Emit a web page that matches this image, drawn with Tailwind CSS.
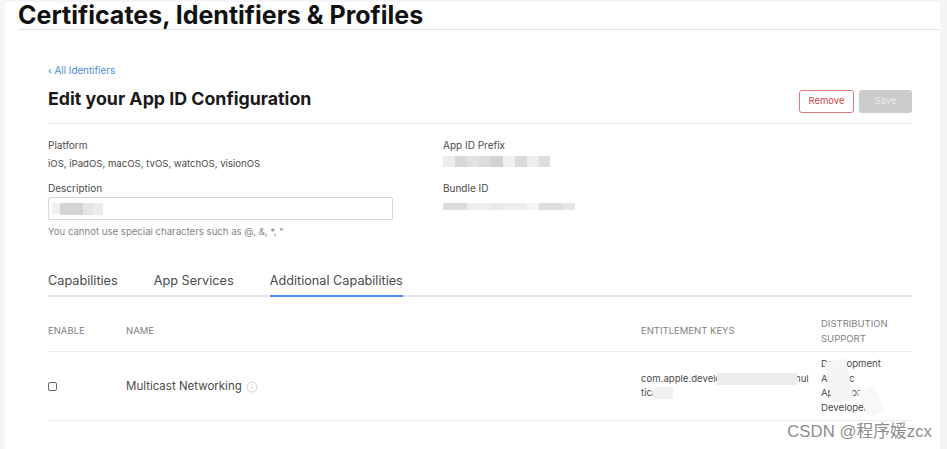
<!DOCTYPE html>
<html lang="en">
<head>
  <meta charset="UTF-8">
  <title>Edit your App ID Configuration</title>
  <script src="https://cdn.jsdelivr.net/npm/@tailwindcss/browser@4"></script>
</head>
<body class="bg-[#f5f5f7] font-['Inter','Liberation_Sans',sans-serif] text-[#333] overflow-hidden">
  <div class="relative w-[947px] h-[449px] pt-[2px] pl-[5px] pr-[7px] overflow-hidden">
    <main class="bg-white h-[447px] pl-[13px] pr-[28px]">
      <!-- Page title -->
      <h1 class="h-[28px] border-b border-[#e3e3e6] text-[25px] leading-[27px] font-bold text-[#111] whitespace-nowrap -mr-[28px]">Certificates, Identifiers &amp; Profiles</h1>

      <section class="pl-[30px]">
        <a href="#" class="block mt-[34px] text-[9.8px] leading-[13px] text-[#4a8ad8]">‹ All Identifiers</a>

        <!-- Heading row -->
        <div class="flex justify-between items-end h-[47px] border-b border-[#e2e2e4] pb-[10px]">
          <h2 class="text-[17.8px] leading-[22px] font-bold text-[#1a1a1a] mb-[3px]">Edit your App ID Configuration</h2>
          <div class="flex gap-[5px]">
            <button class="w-[55px] h-[23px] rounded-[3px] border border-[#e0787a] text-[9.5px] text-[#d0484a] bg-white">Remove</button>
            <button class="w-[53px] h-[23px] rounded-[3px] bg-[#cbcbcb] text-[9.5px] text-[#ececec]">Save</button>
          </div>
        </div>

        <!-- Details -->
        <div class="flex mt-[15px] h-[100px] text-[10px] leading-[13px] text-[#4a4a4a]">
          <div class="w-[395px]">
            <div>Platform</div>
            <div class="mt-[5px] text-[9.6px]">iOS, iPadOS, macOS, tvOS, watchOS, visionOS</div>
            <div class="mt-[12px]">Description</div>
            <div class="mt-[2px] w-[345px] h-[23px] rounded-[2px] border border-[#d6d6d6] flex items-center pl-[3px]">
              <span class="w-[8px] h-[11px] bg-[#f0f0f0]"></span><span class="w-[23px] h-[12px] bg-[#d4d4d4]"></span><span class="w-[10px] h-[12px] bg-[#e4e4e4]"></span><span class="w-[10px] h-[12px] bg-[#ececec]"></span>
            </div>
            <div class="mt-[5px] text-[9.6px] text-[#858585]">You cannot use special characters such as @, &amp;, *, "</div>
          </div>
          <div>
            <div>App ID Prefix</div>
            <div class="mt-[4px] flex h-[11px]">
              <span class="w-[12px] bg-[#ececec]"></span><span class="w-[12px] bg-[#d8d8d8]"></span><span class="w-[12px] bg-[#e2e2e2]"></span><span class="w-[12px] bg-[#dcdcdc]"></span><span class="w-[12px] bg-[#d2d2d2]"></span><span class="w-[12px] bg-[#f0f0f0]"></span><span class="w-[12px] bg-[#dadada]"></span><span class="w-[12px] bg-[#ececec]"></span><span class="w-[11px] bg-[#dedede]"></span>
            </div>
            <div class="mt-[15px]">Bundle ID</div>
            <div class="mt-[8px] flex h-[7px]">
              <span class="w-[24px] bg-[#dcdcdc]"></span><span class="w-[24px] bg-[#eeeeee]"></span><span class="w-[12px] bg-[#e8e8e8]"></span><span class="w-[24px] bg-[#ececec]"></span><span class="w-[12px] bg-[#f4f4f4]"></span><span class="w-[24px] bg-[#dedede]"></span><span class="w-[12px] bg-[#e6e6e6]"></span>
            </div>
          </div>
        </div>

        <!-- Tabs -->
        <div class="flex gap-[36px] mt-[29px] h-[29px] border-b-2 border-[#e4e4e6] text-[12.7px] leading-[20px] text-[#4a4a4a]">
          <a href="#" class="h-[29px] pt-[3px]">Capabilities</a>
          <a href="#" class="h-[29px] pt-[3px]">App Services</a>
          <a href="#" class="h-[29px] pt-[3px] border-b-2 border-[#4a8cf0]">Additional Capabilities</a>
        </div>

        <!-- Capabilities table -->
        <div class="grid grid-cols-[78px_515px_180px_1fr] items-center h-[55px] pt-[15px] border-b border-[#ececec] text-[9.5px] leading-[14.5px] text-[#808080]">
          <div>ENABLE</div>
          <div>NAME</div>
          <div>ENTITLEMENT KEYS</div>
          <div>DISTRIBUTION<br>SUPPORT</div>
        </div>
        <div class="grid grid-cols-[78px_515px_180px_1fr] items-center h-[69px] border-b border-[#ececec] text-[#4a4a4a]">
          <div><input type="checkbox" class="block appearance-none w-[9px] h-[9px] rounded-[2px] border border-[#666] bg-white"></div>
          <div class="flex items-center gap-[4px] pt-[2px] text-[11.5px]">
            Multicast Networking
            <svg width="12" height="12" viewBox="0 0 12 12" fill="none" stroke="#d4d4d4" stroke-width="1"><circle cx="6" cy="6" r="5"/><path d="M6 5.2v3.2M6 3.2v1"/></svg>
          </div>
          <div class="relative text-[9.6px] leading-[14.5px] w-[172px]">
            com.apple.developer.networking.mul<br>ticast
            <span class="absolute left-[76px] top-[1px] w-[80px] h-[12px] bg-[#ececec]"></span>
            <span class="absolute left-[12px] top-[15px] w-[20px] h-[12px] bg-[#f0f0f0]"></span>
          </div>
          <div class="relative text-[9.6px] leading-[14.5px]">
            Development<br>Ad Hoc<br>App Store<br>Developer ID
            <span class="absolute left-[7px] top-[3px] w-[22px] h-[42px] bg-[#f5f5f5] -rotate-12"></span>
            <span class="absolute left-[41px] top-[30px] w-[18px] h-[28px] bg-[#f8f8f8] -rotate-[24deg]"></span>
          </div>
        </div>
      </section>
    </main>

    <!-- Image watermark -->
    <div class="absolute right-[15px] bottom-[7px] font-['Liberation_Sans','Noto_Sans_CJK_SC',sans-serif] text-[16.8px] leading-[20px] text-[#8d8d8d] whitespace-nowrap">CSDN @程序媛zcx</div>
  </div>
</body>
</html>
